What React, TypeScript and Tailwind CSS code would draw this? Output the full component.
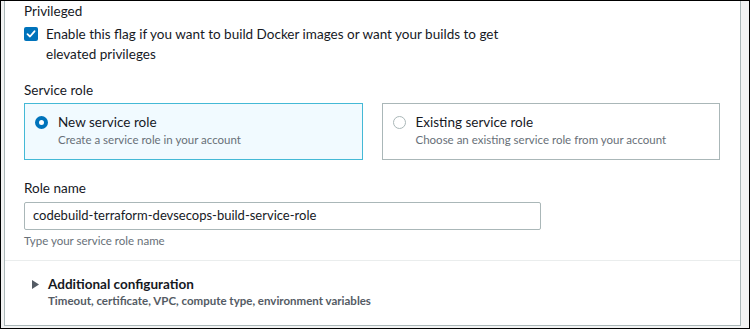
import React from "react";

export default function App() {
  return (
    <div className="w-[750px] h-[329px] border border-black bg-[#f2f3f3] overflow-hidden" style={{ fontFamily: 'Lato, "Liberation Sans", Arial, sans-serif' }}>
      <div className="ml-[3px] mr-[8px] h-[325px] bg-white border-x border-b border-[#aab7b8] flex flex-col text-[#16191f]">
        <div className="pl-[19px] pr-[19px] pt-[1px]">
          <div className="text-[13.5px] leading-[18px]">Privileged</div>
          <label className="flex items-start gap-[8px] mt-[4px]">
            <span className="mt-[3px] w-[14px] h-[14px] rounded-[2px] bg-[#0073bb] flex items-center justify-center shrink-0">
              <svg width="10" height="10" viewBox="0 0 10 10"><path d="M1.5 5.2 L4 7.5 L8.5 2.3" stroke="white" strokeWidth="1.8" fill="none" strokeLinecap="round" strokeLinejoin="round" /></svg>
            </span>
            <span className="text-[13.5px] leading-[20px] w-[470px]">Enable this flag if you want to build Docker images or want your builds to get elevated privileges</span>
          </label>
          <div className="text-[13.5px] leading-[18px] mt-[17px]">Service role</div>
          <div className="grid grid-cols-2 gap-[19px] mt-[4px] w-[696px]">
            <div className="h-[57px] border border-[#44b9d6] bg-[#f1faff] flex items-start gap-[10px] pl-[10px] pt-[8px]">
              <span className="mt-[4px] w-[13px] h-[13px] rounded-full border-[4px] border-[#0073bb] bg-white shrink-0" />
              <div>
                <div className="text-[13.5px] leading-[20px]">New service role</div>
                <div className="text-[11.5px] leading-[16px] text-[#687078]">Create a service role in your account</div>
              </div>
            </div>
            <div className="h-[57px] border border-[#aab7b8] bg-white flex items-start gap-[10px] pl-[10px] pt-[8px]">
              <span className="mt-[4px] w-[13px] h-[13px] rounded-full border border-[#aab7b8] bg-white shrink-0" />
              <div>
                <div className="text-[13.5px] leading-[20px]">Existing service role</div>
                <div className="text-[11.5px] leading-[16px] text-[#687078]">Choose an existing service role from your account</div>
              </div>
            </div>
          </div>
          <div className="text-[13.5px] leading-[18px] mt-[19px]">Role name</div>
          <div className="mt-[5px] w-[517px] h-[28px] border border-[#aab7b8] rounded-[2px] flex items-center pl-[8px] text-[13px]">codebuild-terraform-devsecops-build-service-role</div>
          <div className="text-[11.5px] leading-[16px] text-[#687078] mt-[3px]">Type your service role name</div>
        </div>
        <div className="mt-[11px] border-t border-[#eaeded]" />
        <div className="pl-[27px] pt-[14px] flex items-start gap-[9px]">
          <svg width="7" height="9" viewBox="0 0 7 9" className="mt-[5px]"><path d="M0 0 L7 4.5 L0 9 Z" fill="#545b64" /></svg>
          <div>
            <div className="text-[13.5px] leading-[18px] font-bold text-[#16191f]">Additional configuration</div>
            <div className="text-[11.5px] leading-[16px] font-bold text-[#545b64]">Timeout, certificate, VPC, compute type, environment variables</div>
          </div>
        </div>
      </div>
    </div>
  );
}
